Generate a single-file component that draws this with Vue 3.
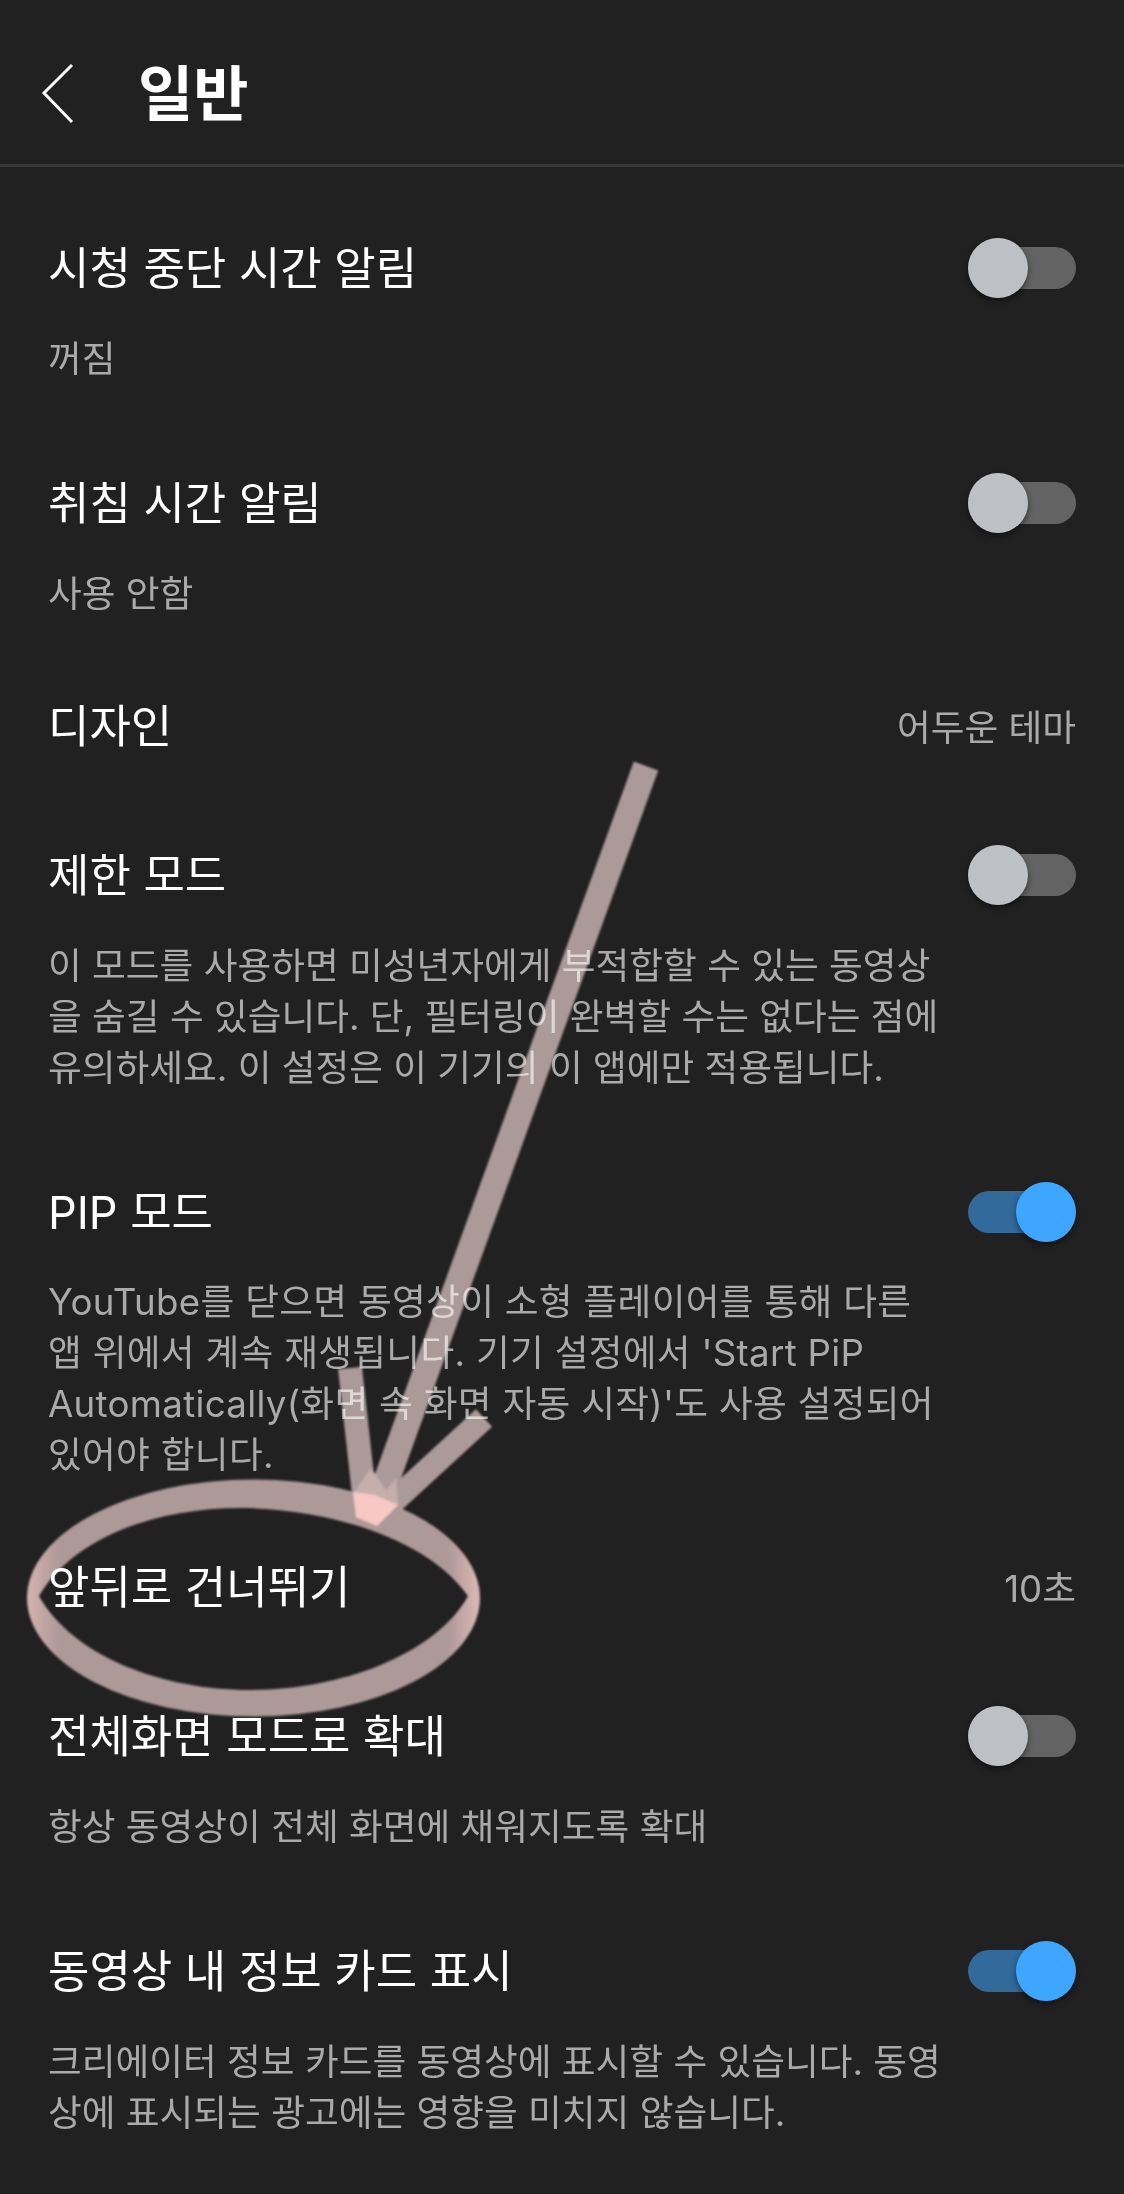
<script setup>
const items = [
  { label: '시청 중단 시간 알림', lines: ['꺼짐'], toggle: 'off' },
  { label: '취침 시간 알림', lines: ['사용 안함'], toggle: 'off' },
  { label: '디자인', value: '어두운 테마', nav: true, tone: 'design' },
  { label: '제한 모드', toggle: 'off', lines: ['이 모드를 사용하면 미성년자에게 부적합할 수 있는 동영상', '을 숨길 수 있습니다. 단, 필터링이 완벽할 수는 없다는 점에', '유의하세요. 이 설정은 이 기기의 이 앱에만 적용됩니다.'] },
  { label: 'PIP 모드', toggle: 'on', tone: 'tight', lines: ['YouTube를 닫으면 동영상이 소형 플레이어를 통해 다른', "앱 위에서 계속 재생됩니다. 기기 설정에서 'Start PiP", "Automatically(화면 속 화면 자동 시작)'도 사용 설정되어", '있어야 합니다.'] },
  { label: '앞뒤로 건너뛰기', value: '10초', nav: true, tone: 'skip' },
  { label: '전체화면 모드로 확대', toggle: 'off', lines: ['항상 동영상이 전체 화면에 채워지도록 확대'] },
  { label: '동영상 내 정보 카드 표시', toggle: 'on', lines: ['크리에이터 정보 카드를 동영상에 표시할 수 있습니다. 동영', '상에 표시되는 광고에는 영향을 미치지 않습니다.'] },
]
</script>

<template>
  <div class="page">
    <header class="header">
      <svg class="back" width="34" height="62" viewBox="0 0 34 62">
        <path d="M31 2 L3 30 L31 59" fill="none" stroke="#fff" stroke-width="3" />
      </svg>
      <h1 class="title">일반</h1>
    </header>
    <main class="list">
      <section v-for="item in items" :key="item.label" class="item" :class="[item.tone, { nav: item.nav }]">
        <div class="row">
          <span class="label">{{ item.label }}</span>
          <span v-if="item.value" class="value">{{ item.value }}</span>
          <span v-if="item.toggle" class="switch" :class="item.toggle"><i class="knob"></i></span>
        </div>
        <div v-if="item.lines" class="desc">
          <div v-for="line in item.lines" :key="line">{{ line }}</div>
        </div>
      </section>
    </main>
    <svg class="scribble" width="1124" height="2194" viewBox="0 0 1124 2194">
      <defs>
        <linearGradient id="ring" x1="0" y1="0" x2="1" y2="0">
          <stop offset="0" stop-color="#d0a8a4" />
          <stop offset="0.07" stop-color="#a28a8a" />
          <stop offset="0.93" stop-color="#a28a8a" />
          <stop offset="1" stop-color="#d8aeaa" />
        </linearGradient>
        <filter id="soft" x="-5%" y="-5%" width="110%" height="110%"><feGaussianBlur stdDeviation="0.9" /></filter>
      </defs>
      <g filter="url(#soft)">
        <path fill="url(#ring)" fill-rule="evenodd"
          d="M27 1598 A226.500 118.500 0 1 1 480 1598 A226.500 118.500 0 1 1 27 1598 Z
             M39 1596 C75 1535 160 1508 240 1508 C320 1508 425 1535 468 1596 C435 1655 340 1690 250 1690 C160 1690 72 1655 39 1596 Z" />
        <path d="M646 766 L375 1512" stroke="#a08a8b" stroke-width="26" fill="none" />
        <path d="M350 1368 L366 1512" stroke="#a08a8b" stroke-width="24" fill="none" />
        <path d="M484 1418 L384 1510" stroke="#a08a8b" stroke-width="24" fill="none" />
        <path d="M371 1468 L353 1494 L398 1506 L396 1478 L386 1490 Z" fill="#bca2a0" />
        <path d="M353 1492 L375 1495 L398 1505 L377 1526 L356 1517 Z" fill="#f7c0bb" />
      </g>
    </svg>
  </div>
</template>

<style scoped>
.page {
  position: relative;
  width: 1124px;
  height: 2194px;
  overflow: hidden;
  background: #212121;
  font-family: Inter, "Noto Sans CJK KR", sans-serif;
}
.header {
  display: flex;
  align-items: center;
  height: 164px;
  padding-left: 41px;
  border-bottom: 3px solid #383838;
  box-sizing: content-box;
}
.back {
  flex: none;
  margin-top: 24px;
}
.title {
  margin: 24px 0 0 63px;
  color: #fff;
  font-size: 60px;
  font-weight: 700;
  line-height: 70px;
}
.list {
  padding: 71px 48px 0 48px;
}
.item + .item {
  margin-top: 89px;
}
.item.design {
  margin-top: 77px;
}
.item.skip {
  margin-top: 77px;
}
.row {
  display: flex;
  align-items: center;
  justify-content: space-between;
  height: 60px;
}
.label {
  color: #fff;
  font-size: 45px;
  line-height: 60px;
  white-space: nowrap;
  transform: translateY(1px);
}
.value {
  color: #aaa;
  font-size: 36.700px;
  transform: translateY(-1px);
}
.desc {
  margin-top: 35px;
  color: #aaa;
  font-size: 36.700px;
  line-height: 51px;
  white-space: nowrap;
}
.tight .desc {
  margin-top: 34px;
  letter-spacing: 0.3px;
}
.switch {
  position: relative;
  flex: none;
  width: 108px;
  height: 42px;
  border-radius: 21px;
}
.switch.off { background: #636363; }
.switch.on { background: #336a9c; }
.knob {
  position: absolute;
  top: -9px;
  width: 60px;
  height: 60px;
  border-radius: 50%;
  box-shadow: 0 3px 6px rgba(0, 0, 0, 0.45);
}
.off .knob { left: 0; background: #bdc1c6; }
.on .knob { right: 0; background: #3ea6ff; }
.scribble {
  position: absolute;
  top: 0;
  left: 0;
  z-index: 2;
  mix-blend-mode: screen;
  pointer-events: none;
}
</style>
